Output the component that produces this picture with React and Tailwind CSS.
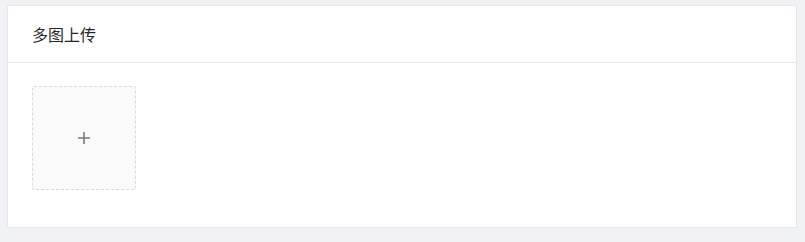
import React from 'react';

const App = () => {
  return (
    <div className="w-[805px] h-[242px] bg-[#f0f2f5] pt-[5px] pl-[7px] pr-[8px] font-['Liberation_Sans','Noto_Sans_CJK_SC',sans-serif]">
      <div className="h-[223px] bg-white border border-[#e8e8e8]">
        {/* Header */}
        <div className="h-[57px] border-b border-[#e8e8e8] px-6 flex items-center">
          <span className="text-[16px] leading-none text-[#262626] font-['Noto_Sans_CJK_SC',sans-serif]">多图上传</span>
        </div>

        {/* Upload area */}
        <div className="pt-[23px] px-6">
          <button className="w-[104px] h-[104px] bg-[#fafafa] border border-dashed border-[#d9d9d9] rounded-[2px] flex items-center justify-center cursor-pointer">
            <svg width="12" height="12" viewBox="0 0 12 12" fill="none">
              <path d="M6 0v12M0 6h12" stroke="#7a7a7a" strokeWidth="1.6" />
            </svg>
          </button>
        </div>
      </div>
    </div>
  );
};

export default App;
